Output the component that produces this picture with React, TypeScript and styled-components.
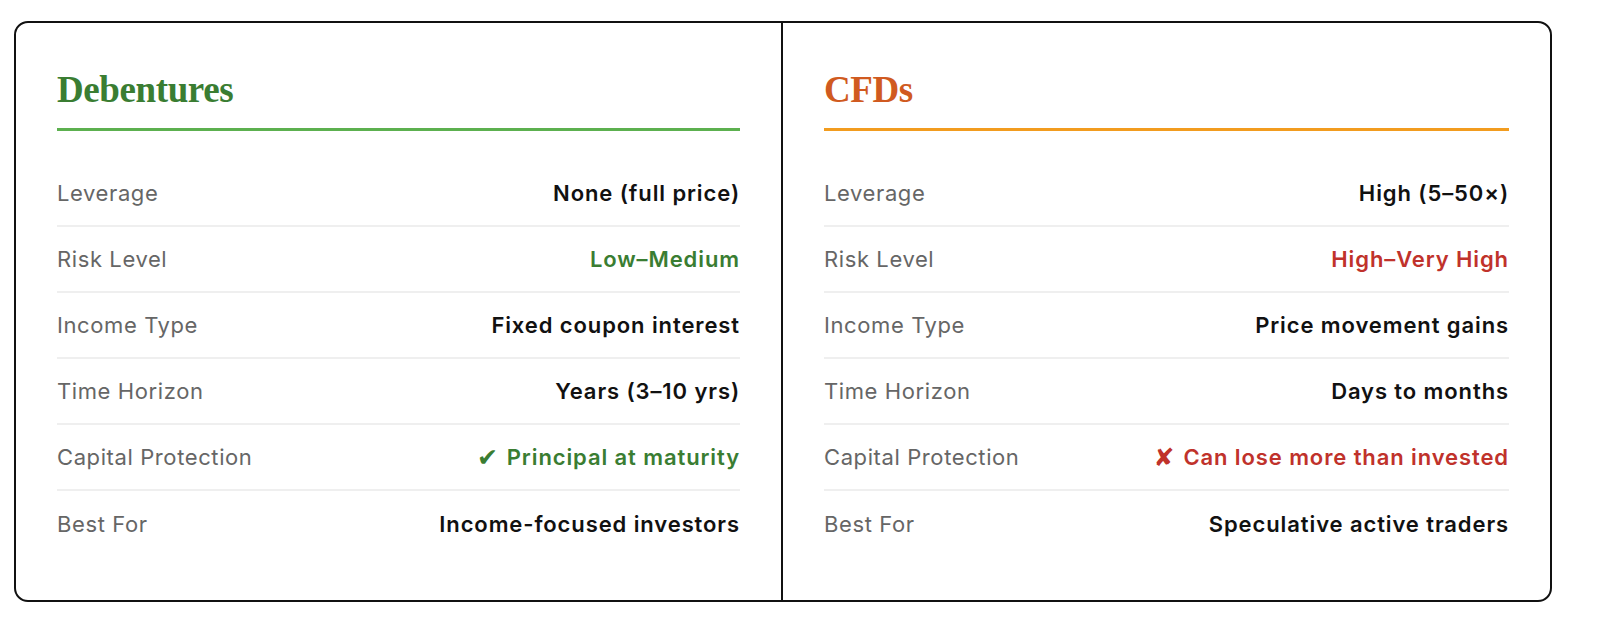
import React from "react";
import styled, { createGlobalStyle } from "styled-components";

const GlobalStyle = createGlobalStyle`
  html, body {
    margin: 0;
    padding: 0;
    background: #ffffff;
    overflow: hidden;
  }
  body {
    font-family: Inter, "DejaVu Sans", sans-serif;
  }
`;

const Page = styled.div`
  padding: 21px 48px 0 14px;
`;

const Card = styled.div`
  display: grid;
  grid-template-columns: 765px 1fr;
  border: 2px solid #111;
  border-radius: 14px;
  overflow: hidden;
`;

const Column = styled.section<{ $divider?: boolean }>`
  padding: 47px 41px 43px;
  border-left: ${(p) => (p.$divider ? "2px solid #111" : "none")};
`;

const Title = styled.h2<{ $color: string; $line: string }>`
  margin: 0 0 30px;
  padding-bottom: 18px;
  font-family: "Liberation Serif", "DejaVu Serif", serif;
  font-weight: 700;
  font-size: 37px;
  line-height: 40px;
  letter-spacing: -0.4px;
  color: ${(p) => p.$color};
  border-bottom: 3px solid ${(p) => p.$line};
`;

const Row = styled.div<{ $last?: boolean }>`
  display: flex;
  align-items: center;
  justify-content: space-between;
  height: 66px;
  border-bottom: ${(p) => (p.$last ? "none" : "2px solid #efefef")};
  box-sizing: border-box;
  font-size: 22px;
`;

const Label = styled.span`
  color: #666666;
  font-weight: 400;
  letter-spacing: 0.6px;
`;

const Value = styled.span<{ $tone?: "good" | "bad" }>`
  display: inline-flex;
  align-items: center;
  font-weight: 600;
  letter-spacing: 0.9px;
  color: ${(p) =>
    p.$tone === "good" ? "#3a7d32" : p.$tone === "bad" ? "#c0322b" : "#111111"};
`;

const Mark = styled.span`
  font-family: "DejaVu Sans", sans-serif;
  font-size: 25px;
  margin-right: 8px;
`;

type Item = { label: string; value: string; tone?: "good" | "bad"; mark?: string };

const debentures: Item[] = [
  { label: "Leverage", value: "None (full price)" },
  { label: "Risk Level", value: "Low–Medium", tone: "good" },
  { label: "Income Type", value: "Fixed coupon interest" },
  { label: "Time Horizon", value: "Years (3–10 yrs)" },
  { label: "Capital Protection", value: "Principal at maturity", tone: "good", mark: "✔" },
  { label: "Best For", value: "Income-focused investors" },
];

const cfds: Item[] = [
  { label: "Leverage", value: "High (5–50×)" },
  { label: "Risk Level", value: "High–Very High", tone: "bad" },
  { label: "Income Type", value: "Price movement gains" },
  { label: "Time Horizon", value: "Days to months" },
  { label: "Capital Protection", value: "Can lose more than invested", tone: "bad", mark: "✘" },
  { label: "Best For", value: "Speculative active traders" },
];

const Panel: React.FC<{
  title: string;
  color: string;
  line: string;
  items: Item[];
  divider?: boolean;
}> = ({ title, color, line, items, divider }) => (
  <Column $divider={divider}>
    <Title $color={color} $line={line}>
      {title}
    </Title>
    {items.map((item, i) => (
      <Row key={item.label} $last={i === items.length - 1}>
        <Label>{item.label}</Label>
        <Value $tone={item.tone}>
          {item.mark && <Mark>{item.mark}</Mark>}
          {item.value}
        </Value>
      </Row>
    ))}
  </Column>
);

const App: React.FC = () => (
  <>
    <GlobalStyle />
    <Page>
      <Card>
        <Panel title="Debentures" color="#3a7d32" line="#5cb04f" items={debentures} />
        <Panel title="CFDs" color="#d05a20" line="#f29c1f" items={cfds} divider />
      </Card>
    </Page>
  </>
);

export default App;
